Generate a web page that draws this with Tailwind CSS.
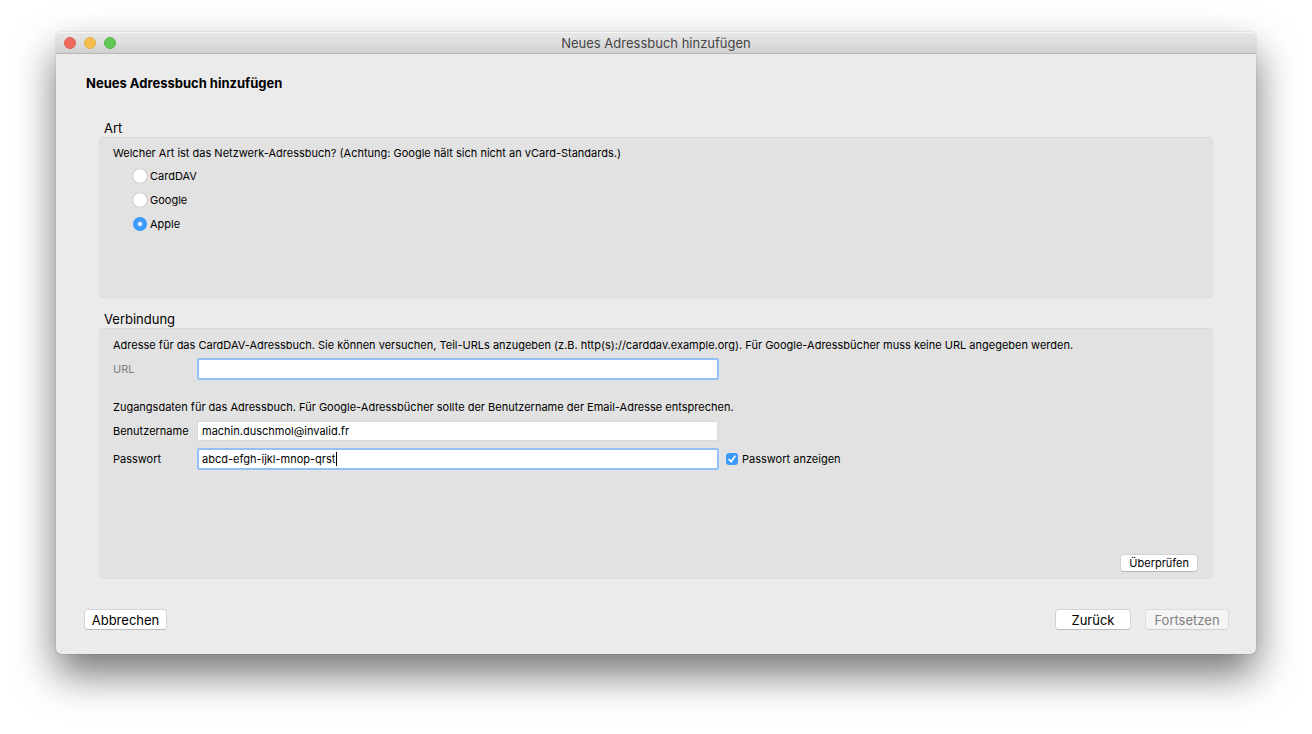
<!DOCTYPE html>
<html lang="de">
<head>
    <meta charset="UTF-8">
    <meta name="viewport" content="width=device-width, initial-scale=1.0">
    <title>Neues Adressbuch hinzufügen</title>
    <script src="https://cdn.jsdelivr.net/npm/@tailwindcss/browser@4"></script>
</head>
<body class="bg-white font-['Inter','Liberation_Sans',sans-serif] text-[11px] leading-4 text-black">
    <div class="flex flex-col min-h-screen px-14 pt-8 pb-20">

        <!-- Window -->
        <div class="flex-1 flex flex-col rounded-[5px] bg-[#ebebeb] shadow-[0_0_1px_rgba(0,0,0,0.5),0_20px_40px_rgba(0,0,0,0.55)]">

            <!-- Title bar -->
            <header class="relative h-[22px] flex items-center justify-center rounded-t-[5px] border-b border-[#b9b9b9] bg-linear-to-b from-[#e9e9e9] to-[#d1d1d1] shadow-[inset_0_1px_0_#f6f6f6]">
                <div class="absolute left-2 flex gap-2">
                    <button type="button" aria-label="Schließen" class="size-3 rounded-full border border-[#dc5d54] bg-[#ee6a5f]"></button>
                    <button type="button" aria-label="Minimieren" class="size-3 rounded-full border border-[#e0b04a] bg-[#f5bf4f]"></button>
                    <button type="button" aria-label="Maximieren" class="size-3 rounded-full border border-[#57b649] bg-[#62c655]"></button>
                </div>
                <p class="text-[13px] leading-5 text-[#454545]">Neues Adressbuch hinzufügen</p>
            </header>

            <form class="flex-1 flex flex-col pt-[19px] pb-6 pl-7 pr-[27px]">
                <h1 class="pl-[2px] text-[13px] leading-5 font-bold">Neues Adressbuch hinzufügen</h1>

                <div class="flex-1 flex flex-col mt-[26px] ml-[15px] mr-4">
                    <!-- Art -->
                    <fieldset>
                        <legend class="pl-[5px] text-[13px] leading-[18px]">Art</legend>
                        <div class="min-h-[161px] rounded border border-[#dfdfdf] border-t-[#d9d9d9] bg-[#e2e2e2] px-[13px] pt-[7px]">
                            <p>Welcher Art ist das Netzwerk-Adressbuch? (Achtung: Google hält sich nicht an vCard-Standards.)</p>
                            <div class="flex flex-col items-start mt-[3px] pl-5">
                                <label class="flex items-center gap-[3px] h-6">
                                    <input type="radio" name="art" class="appearance-none size-[14px] rounded-full bg-white shadow-[0_0_1px_rgba(0,0,0,0.5)] checked:shadow-none checked:bg-[radial-gradient(circle,white_1px,#3b99fc_3px)]">
                                    CardDAV
                                </label>
                                <label class="flex items-center gap-[3px] h-6">
                                    <input type="radio" name="art" class="appearance-none size-[14px] rounded-full bg-white shadow-[0_0_1px_rgba(0,0,0,0.5)] checked:shadow-none checked:bg-[radial-gradient(circle,white_1px,#3b99fc_3px)]">
                                    Google
                                </label>
                                <label class="flex items-center gap-[3px] h-6">
                                    <input type="radio" name="art" checked class="appearance-none size-[14px] rounded-full bg-white shadow-[0_0_1px_rgba(0,0,0,0.5)] checked:shadow-none checked:bg-[radial-gradient(circle,white_1px,#3b99fc_3px)]">
                                    Apple
                                </label>
                            </div>
                        </div>
                    </fieldset>

                    <!-- Verbindung -->
                    <h2 class="mt-3 pl-[5px] text-[13px] leading-[18px]">Verbindung</h2>
                    <div class="flex-1 flex flex-col rounded border border-[#dfdfdf] border-t-[#d9d9d9] bg-[#e2e2e2] px-[13px] pt-2 pb-[6px]">
                        <p>Adresse für das CardDAV-Adressbuch. Sie können versuchen, Teil-URLs anzugeben (z.B. http(s)://carddav.example.org). Für Google-Adressbücher muss keine URL angegeben werden.</p>
                        <div class="flex items-center mt-[5px]">
                            <label for="url" class="w-[84px] text-[#808080]">URL</label>
                            <input id="url" type="text" class="w-[522px] h-[22px] rounded-[2px] border-2 border-[#93c1f5] bg-white px-[3px] outline-none">
                        </div>

                        <p class="mt-[19px]">Zugangsdaten für das Adressbuch. Für Google-Adressbücher sollte der Benutzername der Email-Adresse entsprechen.</p>
                        <div class="flex items-center mt-[6px]">
                            <label for="user" class="w-[84px]">Benutzername</label>
                            <input id="user" type="text" value="machin.duschmol@invalid.fr" class="w-[521px] h-5 border border-[#d9d9d9] bg-white px-1 outline-none">
                        </div>
                        <div class="flex items-center mt-[7px]">
                            <label for="password" class="w-[84px]">Passwort</label>
                            <div class="relative">
                                <input id="password" type="text" value="abcd-efgh-ijkl-mnop-qrst" class="block w-[522px] h-[22px] rounded-[2px] border-2 border-[#93c1f5] bg-white px-[3px] outline-none caret-transparent">
                                <span id="cursor" class="absolute left-[139px] top-1 w-px h-[14px] bg-black"></span>
                            </div>
                            <label class="flex items-center gap-1 ml-[7px]">
                                <span class="relative flex">
                                    <input id="show-password" type="checkbox" checked class="peer appearance-none size-3 rounded-[3px] bg-white checked:bg-[#3b99fc]">
                                    <svg class="absolute inset-0 size-3 pointer-events-none hidden peer-checked:block" viewBox="0 0 12 12" fill="none" stroke="white" stroke-width="1.6" stroke-linecap="round" stroke-linejoin="round"><path d="M3 6.3 5.1 8.8 9 3.2"/></svg>
                                </span>
                                Passwort anzeigen
                            </label>
                        </div>

                        <button type="button" class="mt-auto self-end h-[18px] px-2 mr-[1px] rounded-[4px] border border-[#d2d2d2] border-b-[#b9b9b9] bg-white">Überprüfen</button>
                    </div>
                </div>

                <!-- Buttons -->
                <div class="flex items-center mt-[30px] text-[13px] leading-[18px]">
                    <button type="button" class="h-[21px] min-w-[83px] rounded-[4px] border border-[#d4d4d4] border-b-[#bcbcbc] bg-white">Abbrechen</button>
                    <button type="button" class="ml-auto h-[21px] min-w-[76px] rounded-[4px] border border-[#d4d4d4] border-b-[#bcbcbc] bg-white">Zurück</button>
                    <button type="submit" disabled class="ml-[14px] h-[21px] min-w-[84px] rounded-[4px] border border-[#dcdcdc] border-b-[#d0d0d0] bg-[#f4f4f4] text-[#808080]">Fortsetzen</button>
                </div>
            </form>
        </div>
    </div>

    <script>
        const password = document.getElementById("password");
        const cursor = document.getElementById("cursor");

        // Show or hide the password
        document.getElementById("show-password").addEventListener("change", (event) => {
            password.type = event.target.checked ? "text" : "password";
        });

        // Use the browser's own text cursor as soon as somebody edits the field
        password.addEventListener("focus", () => {
            cursor.classList.add("hidden");
            password.classList.remove("caret-transparent");
        });
    </script>
</body>
</html>
